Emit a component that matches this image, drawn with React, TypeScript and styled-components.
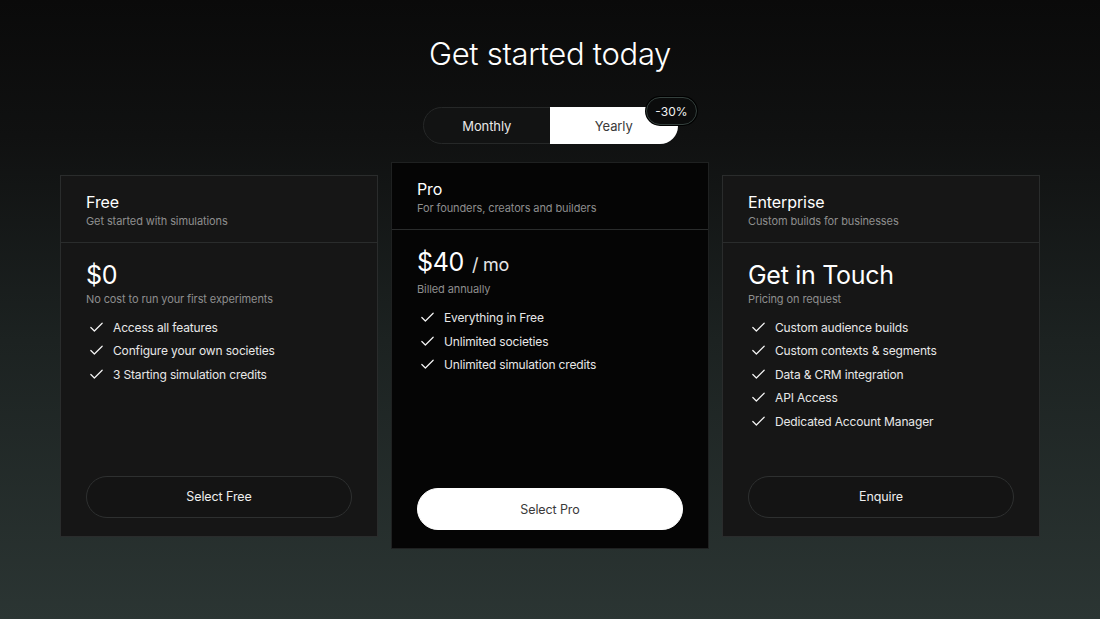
import styled, { createGlobalStyle } from "styled-components";
import { Check } from "lucide-react";

type Plan = {
  name: string;
  tagline: string;
  price: string;
  unit?: string;
  note: string;
  features: string[];
  cta: string;
  featured?: boolean;
};

const plans: Plan[] = [
  {
    name: "Free",
    tagline: "Get started with simulations",
    price: "$0",
    note: "No cost to run your first experiments",
    features: ["Access all features", "Configure your own societies", "3 Starting simulation credits"],
    cta: "Select Free"
  },
  {
    name: "Pro",
    tagline: "For founders, creators and builders",
    price: "$40",
    unit: "/ mo",
    note: "Billed annually",
    features: ["Everything in Free", "Unlimited societies", "Unlimited simulation credits"],
    cta: "Select Pro",
    featured: true
  },
  {
    name: "Enterprise",
    tagline: "Custom builds for businesses",
    price: "Get in Touch",
    note: "Pricing on request",
    features: [
      "Custom audience builds",
      "Custom contexts & segments",
      "Data & CRM integration",
      "API Access",
      "Dedicated Account Manager"
    ],
    cta: "Enquire"
  }
];

const GlobalStyle = createGlobalStyle`
  html, body {
    margin: 0;
    padding: 0;
    height: 100%;
  }
  body {
    font-family: Inter, "Noto Sans", "Liberation Sans", sans-serif;
    color: #fff;
    background: #0a0a0a;
  }
  * { box-sizing: border-box; }
`;

const Page = styled.div`
  width: 100%;
  height: 619px;
  overflow: hidden;
  background: linear-gradient(180deg, #0a0a0a 0%, #101111 22%, #1c2221 55%, #2b3533 100%);
  display: flex;
  flex-direction: column;
  align-items: center;
  padding-top: 33px;
`;

const Heading = styled.h1`
  margin: 0;
  font-size: 31px;
  line-height: 42px;
  font-weight: 300;
  letter-spacing: -0.3px;
`;

const Toggle = styled.div`
  position: relative;
  margin-top: 32px;
  width: 255px;
  height: 37px;
  display: grid;
  grid-template-columns: 1fr 1fr;
  border: 1px solid #262828;
  border-radius: 19px;
  background: #121313;
`;

const ToggleOption = styled.div<{ $active?: boolean }>`
  display: flex;
  align-items: center;
  justify-content: center;
  font-size: 13px;
  letter-spacing: -0.1px;
  color: ${p => (p.$active ? "#3a3a3a" : "#e8e8e8")};
  background: ${p => (p.$active ? "#fff" : "transparent")};
  border-radius: ${p => (p.$active ? "0 18px 18px 0" : "18px 0 0 18px")};
  margin: ${p => (p.$active ? "-1px -1px -1px 0" : "0")};
`;

const Badge = styled.span`
  position: absolute;
  top: -11px;
  right: -20px;
  height: 28px;
  padding: 0 8px;
  display: flex;
  align-items: center;
  border-radius: 14px;
  background: #0b0c0c;
  border: 1px solid #34403d;
  box-shadow: 0 0 0 1px #000;
  font-size: 12px;
  color: #f2f2f2;
`;

const Cards = styled.div`
  margin-top: 18px;
  display: flex;
  align-items: center;
  gap: 13px;
`;

const Card = styled.div<{ $featured?: boolean }>`
  width: 318px;
  height: ${p => (p.$featured ? "387px" : "362px")};
  display: flex;
  flex-direction: column;
  background: ${p => (p.$featured ? "#050505" : "#161616")};
  border: 1px solid ${p => (p.$featured ? "#1f2121" : "#2a2c2c")};
`;

const CardHead = styled.div`
  padding: 16px 25px 13px;
  border-bottom: 1px solid #2a2c2c;
`;

const PlanName = styled.div`
  font-size: 16px;
  line-height: 20px;
  color: #fff;
  letter-spacing: -0.1px;
`;

const Tagline = styled.div`
  margin-top: 2px;
  font-size: 11px;
  line-height: 15px;
  color: #8e8e8e;
  letter-spacing: -0.1px;
`;

const CardBody = styled.div`
  flex: 1;
  display: flex;
  flex-direction: column;
  padding: 15px 25px 18px;
`;

const Price = styled.div`
  font-size: 25px;
  line-height: 34px;
  color: #fff;
  letter-spacing: -0.3px;
  display: flex;
  align-items: baseline;
  gap: 8px;
`;

const Unit = styled.span`
  font-size: 18px;
  color: #e6e6e6;
`;

const Note = styled.div`
  font-size: 11px;
  line-height: 15px;
  color: #8e8e8e;
  letter-spacing: -0.1px;
`;

const Features = styled.ul`
  list-style: none;
  margin: 9px 0 0;
  padding: 0;
`;

const Feature = styled.li`
  display: flex;
  align-items: center;
  gap: 8px;
  height: 23.5px;
  font-size: 12px;
  letter-spacing: -0.15px;
  color: #e8e8e8;
  padding-left: 2px;
`;

const Button = styled.button<{ $primary?: boolean }>`
  margin-top: auto;
  height: 42px;
  width: 100%;
  border-radius: 21px;
  font-family: inherit;
  font-size: 12.5px;
  letter-spacing: -0.1px;
  cursor: pointer;
  background: ${p => (p.$primary ? "#fff" : "#141414")};
  color: ${p => (p.$primary ? "#3a3a3a" : "#eee")};
  border: 1px solid ${p => (p.$primary ? "#fff" : "#2e3030")};
`;

const PlanCard = ({ plan }: { plan: Plan }) => (
  <Card $featured={plan.featured}>
    <CardHead>
      <PlanName>{plan.name}</PlanName>
      <Tagline>{plan.tagline}</Tagline>
    </CardHead>
    <CardBody>
      <Price>
        {plan.price}
        {plan.unit && <Unit>{plan.unit}</Unit>}
      </Price>
      <Note>{plan.note}</Note>
      <Features>
        {plan.features.map(f => (
          <Feature key={f}>
            <Check size={17} strokeWidth={1.7} color="#f5f5f5" />
            {f}
          </Feature>
        ))}
      </Features>
      <Button $primary={plan.featured}>{plan.cta}</Button>
    </CardBody>
  </Card>
);

export default function App() {
  return (
    <>
      <GlobalStyle />
      <Page>
        <Heading>Get started today</Heading>
        <Toggle>
          <ToggleOption>Monthly</ToggleOption>
          <ToggleOption $active>Yearly</ToggleOption>
          <Badge>-30%</Badge>
        </Toggle>
        <Cards>
          {plans.map(p => (
            <PlanCard key={p.name} plan={p} />
          ))}
        </Cards>
      </Page>
    </>
  );
}
